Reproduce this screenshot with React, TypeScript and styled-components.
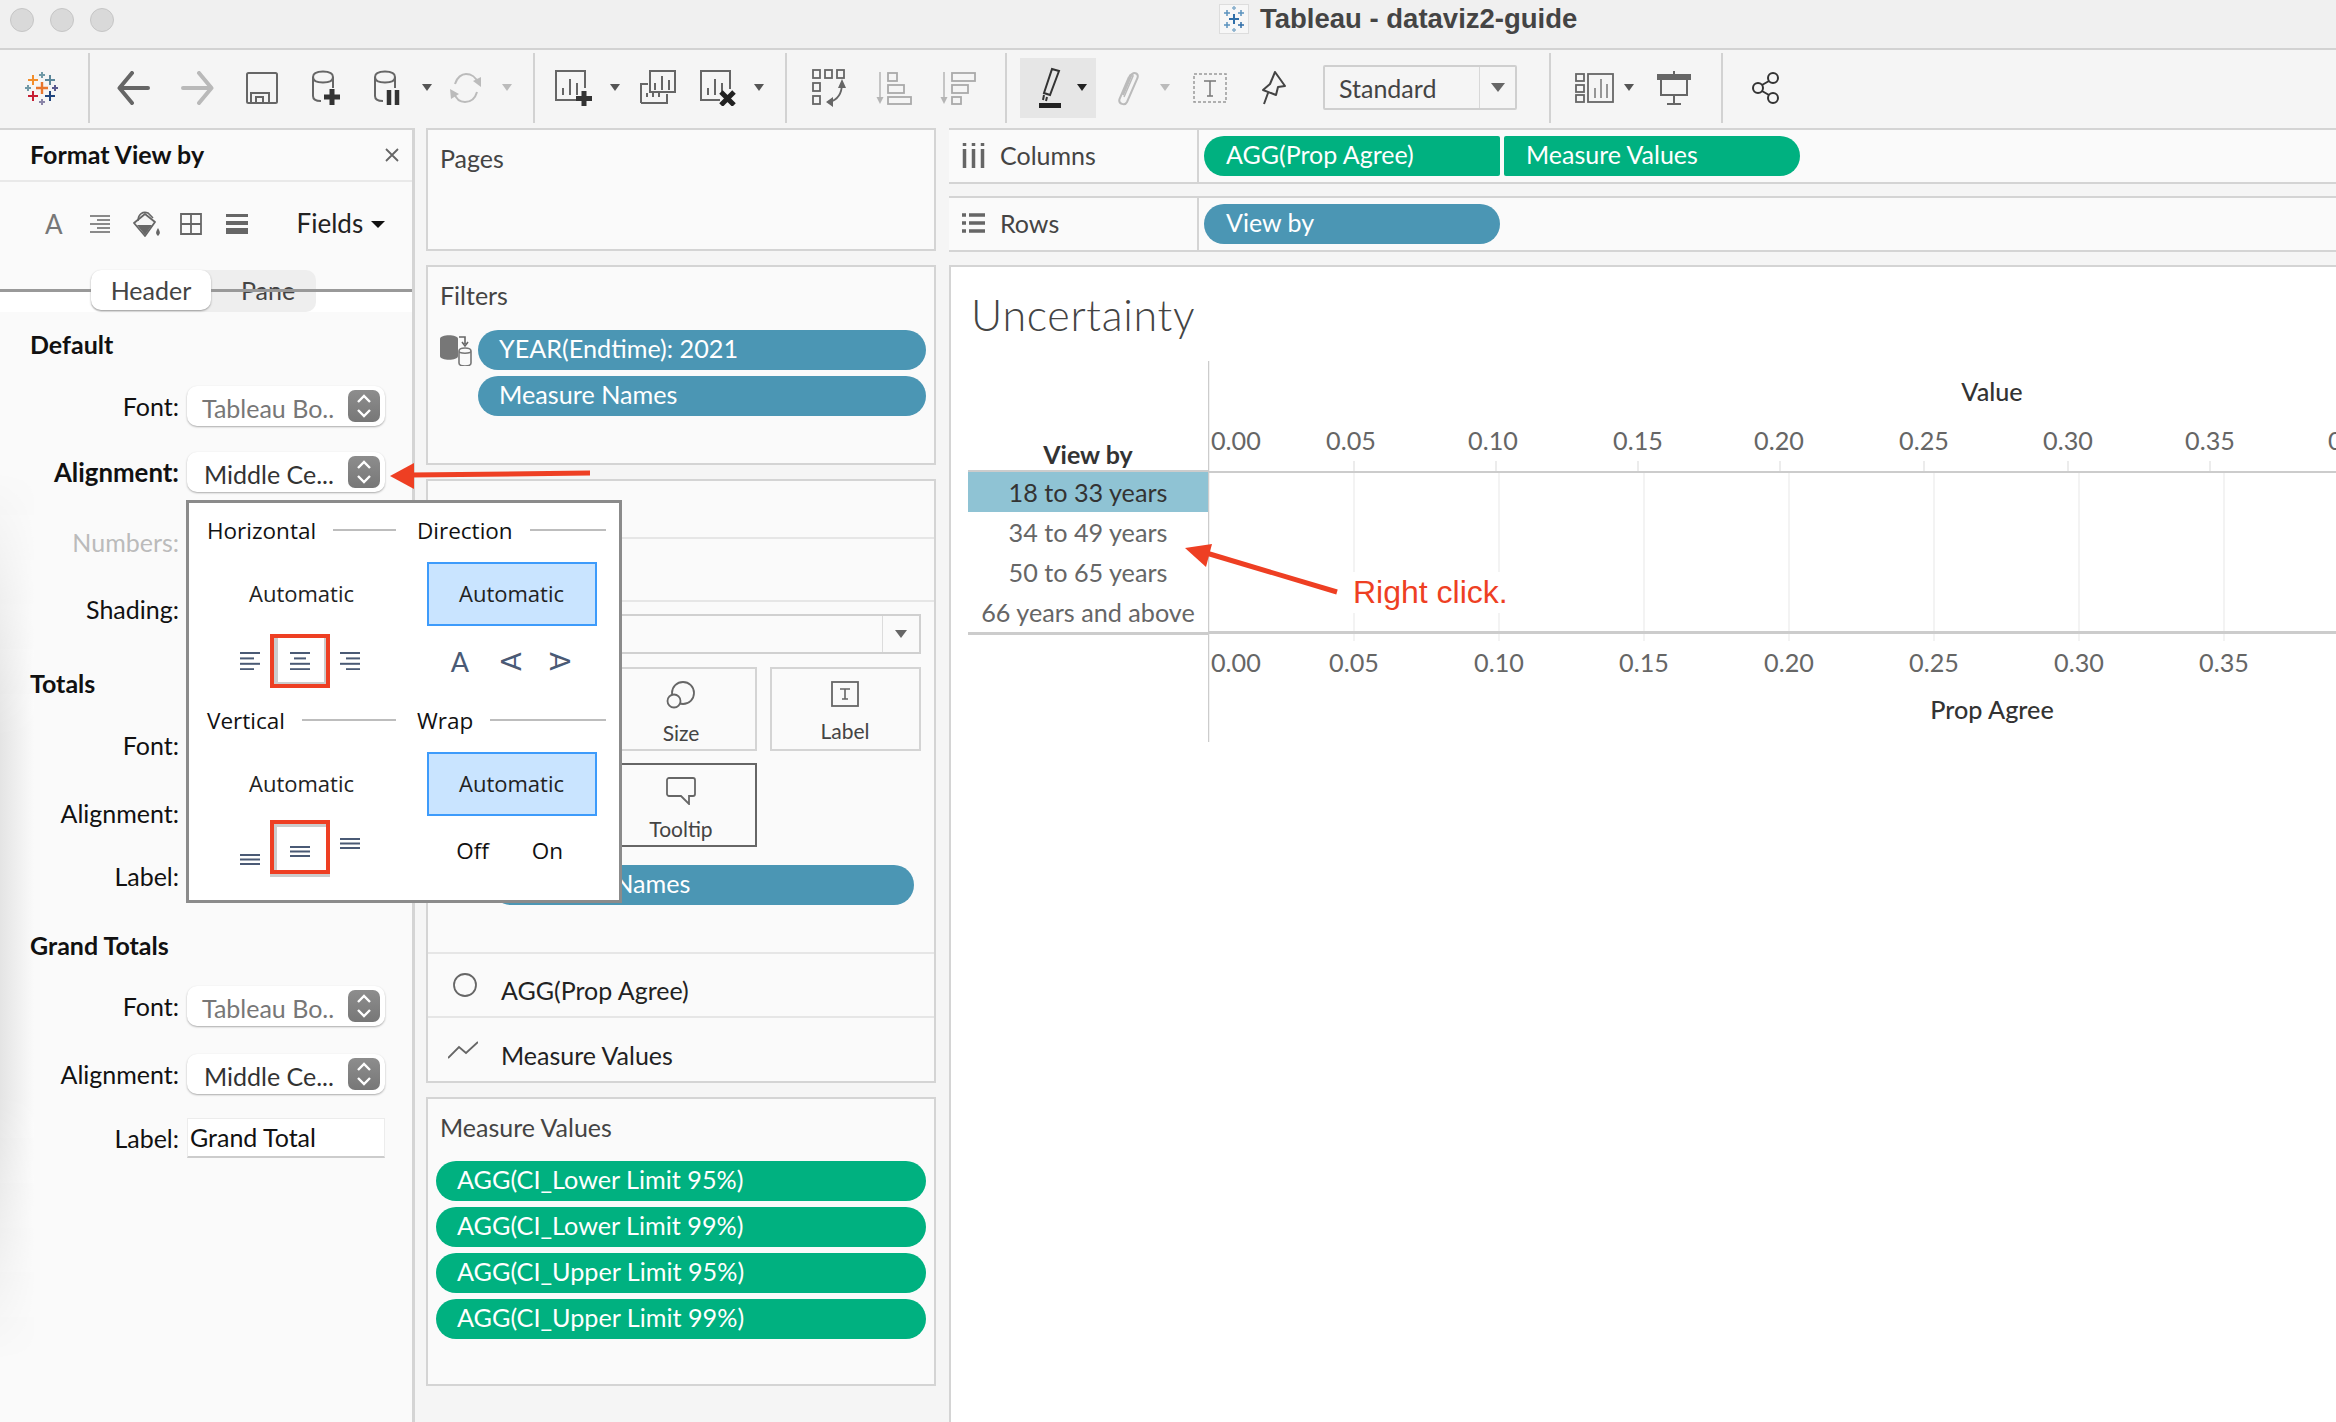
import * as React from "react";
import styled, { createGlobalStyle } from "styled-components";

const Global = createGlobalStyle`
  html, body { margin: 0; padding: 0; background: #f5f5f5; }
  body { width: 2336px; height: 1422px; overflow: hidden; font-family: Lato, "Liberation Sans", sans-serif; color: #333; }
  svg { display: block; }
`;

const Page = styled.div`
  position: relative;
  width: 2336px;
  height: 1422px;
  overflow: hidden;
`;

/* title bar */
const TitleBar = styled.div`
  height: 48px;
  background: #f0f0f0;
  border-bottom: 2px solid #d2d2d2;
  display: flex;
  align-items: center;
  padding-left: 10px;
  gap: 16px;
`;
const Light = styled.span`
  width: 22px;
  height: 22px;
  margin-top: -8px;
  border-radius: 50%;
  background: #d9d9d9;
  border: 1px solid #c6c6c6;
`;
const WindowTitle = styled.div`
  margin-left: 1089px;
  margin-top: -10px;
  display: flex;
  align-items: center;
  gap: 11px;
  font-family: "Liberation Sans", sans-serif;
  font-weight: 700;
  font-size: 27.5px;
  color: #444;
`;

/* toolbar */
const Toolbar = styled.div`
  height: 78px;
  box-sizing: border-box;
  padding-bottom: 3px;
  display: flex;
  align-items: center;
`;
const Tool = styled.span<{ $ml: number }>`
  margin-left: ${(p) => p.$ml}px;
  display: flex;
  align-items: center;
`;
const Sep = styled.span<{ $ml: number }>`
  margin-left: ${(p) => p.$ml}px;
  width: 2px;
  height: 70px;
  background: #d2d2d2;
`;
const Caret = styled.span<{ $ml: number; $c?: string; $big?: boolean }>`
  margin-left: ${(p) => p.$ml}px;
  width: 0;
  height: 0;
  border-left: ${(p) => (p.$big ? 7 : 5)}px solid transparent;
  border-right: ${(p) => (p.$big ? 7 : 5)}px solid transparent;
  border-top: 7px solid ${(p) => p.$c || "#555"};
`;
const HighlightBox = styled.span`
  margin-left: 13px;
  width: 76px;
  height: 60px;
  background: #e6e6e6;
  display: flex;
  align-items: center;
  padding-left: 18px;
  gap: 15px;
  box-sizing: border-box;
`;
const ToolSelect = styled.div`
  margin-left: 37px;
  width: 194px;
  height: 45px;
  box-sizing: border-box;
  border: 2px solid #cfcfcf;
  border-radius: 2px;
  display: flex;
  align-items: center;
  font-size: 25px;
  color: #444;
  padding-left: 14px;
`;
const ToolSelectArrow = styled.span`
  margin-left: auto;
  width: 35px;
  height: 100%;
  border-left: 1px solid #d8d8d8;
  display: flex;
  align-items: center;
  justify-content: center;
`;

/* main columns */
const Main = styled.div`
  display: flex;
  height: 1294px;
`;
const LeftPanel = styled.div`
  position: relative;
  width: 412px;
  background: #fafafa;
  border-top: 2px solid #d4d4d4;
  border-right: 3px solid #d4d4d4;
  &::before {
    content: "";
    position: absolute;
    left: 0;
    top: 340px;
    bottom: 60px;
    width: 34px;
    background: linear-gradient(to right, #e4e4e4, #fafafa);
    -webkit-mask-image: linear-gradient(to bottom, transparent, #000 30%, #000 70%, transparent);
  }
`;
const PanelHead = styled.div`
  height: 50px;
  box-sizing: content-box;
  border-bottom: 2px solid #e9e9e9;
  display: flex;
  align-items: center;
  justify-content: space-between;
  padding: 0 13px 0 30px;
  font-size: 25px;
  font-weight: 700;
  color: #111;
  position: relative;
  & > span {
    margin-top: -3px;
  }
`;
const FormatIcons = styled.div`
  height: 88px;
  display: flex;
  align-items: center;
  padding-bottom: 4px;
  box-sizing: border-box;
  position: relative;
`;
const FormatLetter = styled.span`
  margin-left: 45px;
  font-size: 26px;
  color: #777;
`;
const FieldsLabel = styled.span`
  margin-left: 49px;
  margin-top: -2px;
  font-size: 26px;
  color: #222;
`;
const TabRow = styled.div`
  position: relative;
  height: 42px;
  background: linear-gradient(#fafafa 50%, #fff 50%);
  padding-left: 91px;
  &::before {
    content: "";
    position: absolute;
    left: 0;
    right: 0;
    top: 19px;
    height: 3px;
    background: #999;
    z-index: 1;
  }
`;
const Segmented = styled.div`
  width: 225px;
  height: 42px;
  background: #eeeeee;
  border-radius: 10px;
  display: flex;
  font-size: 25px;
  color: #444;
`;
const Segment = styled.div<{ $active?: boolean }>`
  width: ${(p) => (p.$active ? 120 : 105)}px;
  height: 40px;
  box-sizing: border-box;
  display: flex;
  align-items: center;
  justify-content: center;
  border-radius: 10px;
  ${(p) =>
    p.$active
      ? "background:#fff; box-shadow:0 1px 2px #999; position:relative; z-index:2;"
      : "padding-left:9px;"}
`;
const FormHeading = styled.div<{ $mt: number }>`
  position: relative;
  margin-top: ${(p) => p.$mt}px;
  margin-left: 30px;
  height: 30px;
  line-height: 30px;
  font-size: 25px;
  font-weight: 700;
  color: #111;
`;
const FormRow = styled.div<{ $mt: number }>`
  position: relative;
  margin-top: ${(p) => p.$mt}px;
  height: 40px;
  display: flex;
  align-items: center;
`;
const FormLabel = styled.span<{ $bold?: boolean; $muted?: boolean }>`
  width: 179px;
  text-align: right;
  font-size: ${(p) => (p.$bold ? 25.8 : 25)}px;
  font-weight: ${(p) => (p.$bold ? 700 : 400)};
  color: ${(p) => (p.$muted ? "#bbb" : "#111")};
`;
const SelectField = styled.div<{ $muted?: boolean }>`
  margin-left: 8px;
  width: 198px;
  height: 40px;
  box-sizing: border-box;
  background: #fff;
  border-radius: 10px;
  box-shadow: 0 1px 2px #aaa;
  display: flex;
  align-items: center;
  padding: 3px 5px 0 ${(p) => (p.$muted ? 15 : 17)}px;
  font-size: 25px;
  color: ${(p) => (p.$muted ? "#777" : "#333")};
`;
const Stepper = styled.span`
  margin-left: auto;
  margin-top: -3px;
  width: 32px;
  height: 32px;
  border-radius: 7px;
  background: linear-gradient(#8d8d8d, #777);
  display: flex;
  align-items: center;
  justify-content: center;
`;
const TextField = styled.div`
  margin-left: 8px;
  width: 198px;
  height: 40px;
  box-sizing: border-box;
  background: #fff;
  border: 1px solid #ececec;
  border-bottom: 2px solid #ccc;
  font-size: 25px;
  color: #111;
  padding-left: 2px;
  line-height: 36px;
`;

/* middle column */
const MiddleColumn = styled.div`
  width: 510px;
  margin-left: 11px;
  display: flex;
  flex-direction: column;
  gap: 14px;
`;
const Card = styled.div<{ $h: number }>`
  height: ${(p) => p.$h}px;
  box-sizing: border-box;
  background: #fafafa;
  border: 2px solid #d4d4d4;
  display: flex;
  flex-direction: column;
`;
const CardTitle = styled.div`
  padding: 12px 0 0 12px;
  font-size: 25px;
  line-height: 32px;
  color: #444;
`;
const PillStack = styled.div<{ $left: number; $right: number; $mt: number }>`
  margin: ${(p) => p.$mt}px ${(p) => p.$right}px 0 ${(p) => p.$left}px;
  display: flex;
  flex-direction: column;
  gap: 6px;
  position: relative;
`;
const Pill = styled.div<{ $green?: boolean }>`
  height: 40px;
  border-radius: 20px;
  background: ${(p) => (p.$green ? "#00b180" : "#4b96b4")};
  color: #fff;
  font-size: 25.2px;
  line-height: 37px;
  padding-left: 21px;
`;
const DbIcon = styled.span`
  position: absolute;
  left: -38px;
  top: 4px;
`;
const MarksBlank = styled.div<{ $h: number }>`
  height: ${(p) => p.$h}px;
  border-bottom: 2px solid #e6e6e6;
  box-sizing: border-box;
`;
const MarkSelect = styled.div`
  margin: 12px 13px 0 14px;
  height: 40px;
  box-sizing: border-box;
  border: 2px solid #d0d0d0;
  display: flex;
  align-items: center;
`;
const MarkSelectArrow = styled.span`
  margin-left: auto;
  width: 36px;
  height: 100%;
  border-left: 1px solid #dcdcdc;
  display: flex;
  align-items: center;
  justify-content: center;
`;
const TileGrid = styled.div`
  margin: 13px 13px 0 14px;
  display: grid;
  grid-template-columns: repeat(3, 151px);
  column-gap: 13px;
  row-gap: 12px;
`;
const Tile = styled.div<{ $dark?: boolean }>`
  height: 84px;
  box-sizing: border-box;
  border: 2px solid ${(p) => (p.$dark ? "#666" : "#d4d4d4")};
  display: flex;
  flex-direction: column;
  align-items: center;
  font-size: 21px;
  color: #444;
  padding: 12px 1px 0 0;
  gap: 11px;
`;
const MarksPillSlot = styled.div`
  margin: 18px 20px 0 63px;
  height: 88px;
`;
const MarkLayer = styled.div`
  height: 65px;
  box-sizing: border-box;
  border-top: 2px solid #e6e6e6;
  display: flex;
  align-items: center;
  font-size: 25px;
  color: #222;
  padding: 10px 0 0 20px;
`;
const LayerIcon = styled.span<{ $dx?: number }>`
  width: ${(p) => 53 - (p.$dx || 0)}px;
  margin-left: ${(p) => p.$dx || 0}px;
  margin-top: -10px;
`;

/* right column */
const RightColumn = styled.div`
  flex: 1;
  margin-left: 13px;
  display: flex;
  flex-direction: column;
`;
const Shelf = styled.div<{ $mb: number }>`
  height: 56px;
  box-sizing: border-box;
  margin-bottom: ${(p) => p.$mb}px;
  background: #fafafa;
  border-top: 2px solid #d4d4d4;
  border-bottom: 2px solid #d4d4d4;
  display: flex;
`;
const ShelfLabel = styled.div`
  width: 250px;
  box-sizing: border-box;
  border-right: 2px solid #d4d4d4;
  display: flex;
  align-items: center;
  gap: 15px;
  padding: 0 0 2px 13px;
  font-size: 25px;
  color: #444;
`;
const ShelfPills = styled.div`
  display: flex;
  gap: 4px;
  padding: 6px 0 0 5px;
`;
const ShelfPill = styled.div<{ $green?: boolean; $side?: "l" | "r" | "b" }>`
  width: 296px;
  height: 40px;
  box-sizing: border-box;
  padding-left: 22px;
  font-size: 25px;
  line-height: 37px;
  color: #fff;
  background: ${(p) => (p.$green ? "#00b180" : "#4b96b4")};
  border-radius: ${(p) =>
    p.$side === "l" ? "20px 2px 2px 20px" : p.$side === "r" ? "2px 20px 20px 2px" : "20px"};
`;
const Viz = styled.div`
  flex: 1;
  background: #fff;
  border-top: 2px solid #d4d4d4;
  border-left: 2px solid #d4d4d4;
  display: flex;
  flex-direction: column;
`;
const VizTitle = styled.div`
  height: 94px;
  box-sizing: border-box;
  padding: 0 0 0 20px;
  display: flex;
  align-items: center;
  font-size: 43px;
  font-weight: 300;
  letter-spacing: 0.7px;
  color: #444;
`;
const ChartRow = styled.div`
  display: flex;
  margin-left: 17px;
`;
const HeaderColumn = styled.div`
  width: 240px;
`;
const HeaderTitle = styled.div`
  height: 111px;
  box-sizing: border-box;
  display: flex;
  align-items: flex-end;
  justify-content: center;
  font-size: 25px;
  font-weight: 700;
  color: #333;
  border-bottom: 2px solid #ccc;
  padding-bottom: 1px;
`;
const HeaderRow = styled.div<{ $selected?: boolean }>`
  height: 40px;
  display: flex;
  align-items: center;
  justify-content: center;
  font-size: 25.2px;
  color: ${(p) => (p.$selected ? "#333" : "#666")};
  background: ${(p) => (p.$selected ? "#8fc3d4" : "transparent")};
`;
const HeaderEnd = styled.div`
  border-top: 3px solid #ccc;
`;

/* alignment popup */
const Popup = styled.div`
  position: absolute;
  left: 186px;
  top: 500px;
  width: 436px;
  height: 403px;
  box-sizing: border-box;
  background: #fff;
  border: 3px solid #8b8b8b;
  display: flex;
  padding: 14px 0 0 18px;
  gap: 21px;
  z-index: 5;
  font-family: "Open Sans", sans-serif;
`;
const PopupColumn = styled.div`
  width: 189px;
`;
const PopupHead = styled.div<{ $mt?: number }>`
  margin-top: ${(p) => p.$mt || 0}px;
  height: 28px;
  box-sizing: border-box;
  padding-bottom: 2px;
  display: flex;
  align-items: center;
  gap: 17px;
  font-size: 22.5px;
  color: #111;
  &::after {
    content: "";
    flex: 1;
    height: 2px;
    background: #bdbdbd;
  }
`;
const PopupOption = styled.div<{ $on?: boolean }>`
  width: 170px;
  height: 64px;
  margin: 17px auto 0;
  box-sizing: border-box;
  padding-bottom: 3px;
  display: flex;
  align-items: center;
  justify-content: center;
  font-size: 22px;
  color: #222;
  background: ${(p) => (p.$on ? "#c9e4ff" : "transparent")};
  border: 2px solid ${(p) => (p.$on ? "#3d9bfb" : "transparent")};
`;
const PopupIcons = styled.div<{ $mt: number }>`
  margin: ${(p) => p.$mt}px 0 0 -3px;
  height: 54px;
  display: flex;
  justify-content: center;
  align-items: center;
`;
const IconCell = styled.span<{ $dy?: number }>`
  width: 50px;
  height: 54px;
  display: flex;
  align-items: center;
  justify-content: center;
  transform: translateY(${(p) => p.$dy || 0}px);
`;
const RedBox = styled.span<{ $inset: string }>`
  width: 60px;
  height: 54px;
  margin: 0 -5px;
  box-sizing: border-box;
  border: 4px solid #ee3f23;
  box-shadow: ${(p) => p.$inset};
  display: flex;
  align-items: center;
  justify-content: center;
`;
const LowLines = styled.span`
  margin-top: 8px;
`;
const DirectionGlyph = styled.span<{ $rot?: number }>`
  font-family: Lato, sans-serif;
  font-size: 27px;
  color: #4a5a75;
  transform: rotate(${(p) => p.$rot || 0}deg);
`;
const WrapChoice = styled.span<{ $w: number }>`
  width: ${(p) => p.$w}px;
  margin-top: 6px;
  text-align: center;
  font-size: 22.5px;
  color: #111;
`;

/* annotation over the view */
const RightClick = styled.div`
  position: absolute;
  left: 1342px;
  top: 572px;
  height: 41px;
  padding: 0 4px 0 11px;
  background: #fff;
  font-family: "Liberation Sans", sans-serif;
  font-size: 32px;
  line-height: 41px;
  color: #ee3f23;
  z-index: 6;
`;
const ArrowLayer = styled.svg`
  position: absolute;
  left: 0;
  top: 0;
  z-index: 7;
  pointer-events: none;
`;

const Cross = ({ x, y, s, c, w = 2 }: { x: number; y: number; s: number; c: string; w?: number }) => (
  <path d={`M${x - s} ${y}H${x + s}M${x} ${y - s}V${y + s}`} stroke={c} strokeWidth={w} fill="none" />
);

const TableauLogo = () => (
  <svg width="34" height="34" viewBox="0 0 34 34">
    <Cross x={17} y={17} s={6} c="#e8762d" w={2.4} />
    <Cross x={8} y={9} s={5} c="#f28e2b" />
    <Cross x={25} y={9} s={5} c="#5b879b" />
    <Cross x={8} y={25} s={5} c="#c72035" />
    <Cross x={25} y={25} s={5} c="#1f447e" />
    <Cross x={17} y={4} s={3} c="#7099a6" />
    <Cross x={3} y={17} s={3} c="#7099a6" />
    <Cross x={30} y={17} s={3} c="#59598f" />
    <Cross x={17} y={31} s={3} c="#8a85a8" />
  </svg>
);

const DocLogo = () => (
  <svg width="30" height="30" viewBox="0 0 30 30">
    <rect x="0.5" y="0.5" width="29" height="29" fill="#f7f7f7" stroke="#ddd" />
    <Cross x={15} y={15} s={5} c="#2f6ea8" />
    <Cross x={8} y={9} s={3} c="#5b93bf" w={1.5} />
    <Cross x={22} y={9} s={3} c="#5b93bf" w={1.5} />
    <Cross x={8} y={21} s={3} c="#5b93bf" w={1.5} />
    <Cross x={22} y={21} s={3} c="#2f6ea8" w={1.5} />
    <Cross x={15} y={4} s={2} c="#86aecb" w={1.5} />
    <Cross x={15} y={26} s={2} c="#86aecb" w={1.5} />
  </svg>
);

const ArrowIcon = ({ flip, c }: { flip?: boolean; c: string }) => (
  <svg width="33" height="34" viewBox="0 0 33 34" style={flip ? { transform: "scaleX(-1)" } : undefined}>
    <path d="M31 17H3M15 2L2.5 17L15 32" fill="none" stroke={c} strokeWidth="4" strokeLinecap="round" strokeLinejoin="round" />
  </svg>
);

const SaveIcon = () => (
  <svg width="32" height="32" viewBox="0 0 32 32">
    <rect x="1" y="1" width="30" height="30" rx="1.5" fill="none" stroke="#666" strokeWidth="2" />
    <path d="M5 31V21H23V31M10 31V25H17V31" fill="none" stroke="#666" strokeWidth="2" />
  </svg>
);

const Cylinder = () => (
  <path
    d="M1 7C1 3 5 1.5 11 1.5S21 3 21 7C21 11 17 12.5 11 12.5S1 11 1 7ZM1 7V26C1 29 4 31 9 31M21 7V18"
    fill="none"
    stroke="#666"
    strokeWidth="2"
  />
);

const AddSourceIcon = () => (
  <svg width="28" height="36" viewBox="0 0 28 36">
    <Cylinder />
    <path d="M20 19V35M12 27H28" stroke="#333" strokeWidth="5" fill="none" />
  </svg>
);

const PauseSourceIcon = () => (
  <svg width="26" height="36" viewBox="0 0 26 36">
    <Cylinder />
    <path d="M15 20V35M23 20V35" stroke="#333" strokeWidth="4.5" fill="none" />
  </svg>
);

const RefreshIcon = () => (
  <svg width="33" height="32" viewBox="0 0 33 32">
    <path d="M6 12C8 5 13 2 17 2C22 2 27 5 29 11M28 20C26 27 21 30 16 30C11 30 7 27 5 21" fill="none" stroke="#bbb" strokeWidth="2" />
    <path d="M24 9L32 5L32 15ZM1 17L10 22L2 27Z" fill="#bbb" />
  </svg>
);

const Bars = ({ x, y, h = 14 }: { x: number; y: number; h?: number }) => (
  <path d={`M${x} ${y + h}V${y + h - 7}M${x + 7} ${y + h}V${y}M${x + 14} ${y + h}V${y + 4}`} stroke="#666" strokeWidth="2" fill="none" />
);

const NewSheetIcon = () => (
  <svg width="37" height="36" viewBox="0 0 37 36">
    <path d="M23 30H1V1H30V18" fill="none" stroke="#666" strokeWidth="2" />
    <Bars x={8} y={9} h={16} />
    <path d="M29 21V36M21 28.5H37" stroke="#333" strokeWidth="5" fill="none" />
  </svg>
);

const DupSheetIcon = () => (
  <svg width="36" height="36" viewBox="0 0 36 36">
    <rect x="10" y="1" width="25" height="21" fill="#f5f5f5" stroke="#666" strokeWidth="2" />
    <Bars x={15} y={6} />
    <path d="M1 33V14H8M1 33H27V24" fill="none" stroke="#666" strokeWidth="2" />
    <path d="M7 27V23M13 27V23M19 27V23" stroke="#666" strokeWidth="2" />
  </svg>
);

const ClearSheetIcon = () => (
  <svg width="36" height="36" viewBox="0 0 36 36">
    <path d="M20 30H1V1H30V19" fill="none" stroke="#666" strokeWidth="2" />
    <Bars x={8} y={9} h={16} />
    <path d="M21 22L34 35M34 22L21 35" stroke="#222" strokeWidth="5" fill="none" />
  </svg>
);

const SwapIcon = () => (
  <svg width="35" height="38" viewBox="0 0 35 38">
    <g fill="none" stroke="#666" strokeWidth="1.8">
      <rect x="1" y="1" width="7" height="8" />
      <rect x="13" y="1" width="7" height="8" />
      <rect x="25" y="1" width="7" height="8" />
      <rect x="1" y="14" width="7" height="8" />
      <rect x="1" y="27" width="7" height="8" />
      <path d="M30 14C30 24 26 31 17 33" />
    </g>
    <path d="M30 10L34 19H26ZM14 33L21 28V38Z" fill="#666" />
  </svg>
);

const SortIcon = ({ desc }: { desc?: boolean }) => (
  <svg width="36" height="34" viewBox="0 0 36 34">
    <path d="M4 1V30" stroke="#b5b5b5" strokeWidth="1.5" />
    <path d="M0.5 26H7.5L4 33Z" fill="#b5b5b5" />
    <g fill="none" stroke="#aaa" strokeWidth="1.8">
      {desc ? (
        <>
          <rect x="12" y="2" width="23" height="8" />
          <rect x="12" y="14" width="16" height="8" />
          <rect x="12" y="26" width="9" height="7" />
        </>
      ) : (
        <>
          <rect x="12" y="2" width="9" height="8" />
          <rect x="12" y="14" width="16" height="8" />
          <rect x="12" y="26" width="23" height="7" />
        </>
      )}
    </g>
  </svg>
);

const PenIcon = () => (
  <svg width="24" height="42" viewBox="0 0 24 42">
    <path d="M14 2L21 4L12 28L6 26Z" fill="none" stroke="#333" strokeWidth="2" />
    <path d="M6 28L5 33M9 30L8 34" stroke="#333" strokeWidth="2" />
    <rect x="1" y="36" width="22" height="5" fill="#222" />
  </svg>
);

const ClipIcon = () => (
  <svg width="24" height="36" viewBox="0 0 24 36">
    <path d="M7 25L15 6C17 1 23 3 21.500 8L11 32C9 36 2 34 3.500 29L13 7" fill="none" stroke="#bbb" strokeWidth="2" />
    <path d="M13 7C14 4 17 3 17 6L8 27" fill="none" stroke="#bbb" strokeWidth="1.500" />
  </svg>
);

const TextBoxIcon = () => (
  <svg width="34" height="30" viewBox="0 0 34 30">
    <rect x="1" y="1" width="32" height="28" fill="none" stroke="#999" strokeWidth="1.5" strokeDasharray="3 2" />
    <path d="M11 8H23M17 8V23M14 23H20" stroke="#777" strokeWidth="1.5" fill="none" />
  </svg>
);

const PinIcon = () => (
  <svg width="25" height="34" viewBox="0 0 25 34">
    <path d="M14 1L24 15L17 16L15 24L2 19L9 13ZM7 22L3 33" fill="none" stroke="#444" strokeWidth="2" strokeLinejoin="round" />
  </svg>
);

const ShowMeIcon = () => (
  <svg width="39" height="30" viewBox="0 0 39 30">
    <g fill="none" stroke="#666" strokeWidth="1.8">
      <rect x="1" y="1" width="8" height="7" />
      <rect x="1" y="12" width="8" height="7" />
      <rect x="1" y="22" width="8" height="7" />
      <rect x="13" y="1" width="25" height="28" />
    </g>
    <path d="M20 25V15M26 25V6M32 25V11" stroke="#777" strokeWidth="1.5" />
  </svg>
);

const PresentIcon = () => (
  <svg width="34" height="34" viewBox="0 0 34 34">
    <rect x="0" y="3" width="34" height="6" fill="#666" />
    <path d="M17 0V3M4 9V24H30V9M17 24V33M10 33H24" fill="none" stroke="#666" strokeWidth="2" />
  </svg>
);

const ShareIcon = () => (
  <svg width="28" height="32" viewBox="0 0 28 32">
    <g fill="none" stroke="#333" strokeWidth="2">
      <circle cx="21" cy="6" r="5" />
      <circle cx="6" cy="16" r="5" />
      <circle cx="21" cy="26" r="5" />
      <path d="M10 13L17 9M10 19L17 23" />
    </g>
  </svg>
);

const CloseIcon = () => (
  <svg width="14" height="14" viewBox="0 0 14 14">
    <path d="M1 1L13 13M13 1L1 13" stroke="#666" strokeWidth="1.8" />
  </svg>
);

const AlignRightIcon = () => (
  <svg width="20" height="18" viewBox="0 0 20 18">
    <path d="M0 1H20M7 5H20M0 9H20M7 13H20M0 17H20" stroke="#666" strokeWidth="1.6" />
  </svg>
);

const BucketIcon = () => (
  <svg width="28" height="26" viewBox="0 0 28 26">
    <path d="M1 12L12 3L22 11L12 25Z" fill="#f5f5f5" stroke="#666" strokeWidth="1.8" strokeLinejoin="round" />
    <path d="M4 14H19L12 24Z" fill="#666" />
    <path d="M5 10C5 3 10 0 15 2L20 7" fill="none" stroke="#666" strokeWidth="1.6" />
    <path d="M25 17C27 21 28 22 25 25C22 22 23 21 25 17Z" fill="#666" />
  </svg>
);

const GridIcon = () => (
  <svg width="22" height="22" viewBox="0 0 22 22">
    <path d="M1 1H21V21H1ZM11 1V21M1 11H21" fill="none" stroke="#666" strokeWidth="1.8" />
  </svg>
);

const LinesIcon = () => (
  <svg width="22" height="20" viewBox="0 0 22 20">
    <rect y="0" width="22" height="3" fill="#666" />
    <rect y="7" width="22" height="4" fill="#666" />
    <rect y="14" width="22" height="6" fill="#666" />
  </svg>
);

const StepperIcon = () => (
  <svg width="18" height="26" viewBox="0 0 18 26">
    <path d="M3 9L9 3L15 9M3 17L9 23L15 17" fill="none" stroke="#fff" strokeWidth="2.4" />
  </svg>
);

const TinyCaret = ({ c, s = 6 }: { c: string; s?: number }) => (
  <svg width={s * 2} height={s + 2} viewBox={`0 0 ${s * 2} ${s + 2}`}>
    <path d={`M0 0H${s * 2}L${s} ${s + 2}Z`} fill={c} />
  </svg>
);

const DataSourceIcon = () => (
  <svg width="32" height="32" viewBox="0 0 32 32">
    <path d="M0 5C0 0 18 0 18 5V22C18 27 0 27 0 22Z" fill="#777" />
    <path d="M19 3H25V10M22 8L25 12L28 8" fill="none" stroke="#666" strokeWidth="1.6" />
    <path d="M19 17C19 13 31 13 31 17V29C31 33 19 33 19 29ZM19 17C19 20 31 20 31 17" fill="#fafafa" stroke="#777" strokeWidth="1.6" />
  </svg>
);

const SizeIcon = () => (
  <svg width="30" height="28" viewBox="0 0 30 28">
    <circle cx="17" cy="12" r="11" fill="none" stroke="#666" strokeWidth="1.8" />
    <circle cx="8" cy="20" r="6.500" fill="#fafafa" stroke="#666" strokeWidth="1.8" />
  </svg>
);

const LabelIcon = () => (
  <svg width="28" height="26" viewBox="0 0 28 26">
    <rect x="1" y="1" width="26" height="24" fill="none" stroke="#666" strokeWidth="1.8" />
    <path d="M9 8H19M14 8V18M11 18H17" fill="none" stroke="#666" strokeWidth="1.6" />
  </svg>
);

const TooltipIcon = () => (
  <svg width="30" height="28" viewBox="0 0 30 28">
    <path d="M3 1H27C28 1 29 2 29 3V17C29 18 28 19 27 19H23V27L15 19H3C2 19 1 18 1 17V3C1 2 2 1 3 1Z" fill="none" stroke="#666" strokeWidth="1.8" />
  </svg>
);

const CircleIcon = () => (
  <svg width="24" height="24" viewBox="0 0 24 24">
    <circle cx="12" cy="12" r="11" fill="none" stroke="#666" strokeWidth="1.8" />
  </svg>
);

const ZigzagIcon = () => (
  <svg width="30" height="18" viewBox="0 0 30 18">
    <path d="M0 17L11 6L18 12L30 1" fill="none" stroke="#666" strokeWidth="1.8" />
  </svg>
);

const ColumnsIcon = () => (
  <svg width="23" height="25" viewBox="0 0 23 25">
    <path d="M2.500 0V3M11.500 0V3M20.500 0V3M2.500 6V25M11.500 6V25M20.500 6V25" stroke="#666" strokeWidth="3.500" />
  </svg>
);

const RowsIcon = () => (
  <svg width="23" height="20" viewBox="0 0 23 20">
    <path d="M0 2H4M7 2H23M0 10H4M7 10H23M0 18H4M7 18H23" stroke="#666" strokeWidth="3.500" />
  </svg>
);

const alignments: Record<string, number[][]> = {
  left: [[0, 20], [0, 14], [0, 20], [0, 14]],
  center: [[0, 20], [4, 16], [0, 20], [0, 20]],
  right: [[0, 20], [6, 20], [0, 20], [6, 20]],
};

const AlignLines = ({ kind }: { kind: string }) => (
  <svg width="20" height="18" viewBox="0 0 20 18">
    {alignments[kind].map(([a, b], i) => (
      <rect key={i} x={a} y={i * 5.4} width={b - a} height="2" fill="#4a5a75" />
    ))}
  </svg>
);

const TripleLines = () => (
  <svg width="20" height="11" viewBox="0 0 20 11">
    <rect y="0" width="20" height="2" fill="#4a5a75" />
    <rect y="4.500" width="20" height="2" fill="#4a5a75" />
    <rect y="9" width="20" height="2" fill="#4a5a75" />
  </svg>
);

const topTicks = [
  ["0.00", 0],
  ["0.05", 143],
  ["0.10", 285],
  ["0.15", 430],
  ["0.20", 571],
  ["0.25", 716],
  ["0.30", 860],
  ["0.35", 1002],
  ["0.40", 1145],
] as const;

const bottomTicks = ["0.00", "0.05", "0.10", "0.15", "0.20", "0.25", "0.30", "0.35"];

const AxisChart = () => (
  <svg width="1128" height="381" viewBox="0 0 1128 381" fontFamily="Lato, sans-serif" fontSize="25.200">
    {bottomTicks.slice(1).map((_, i) => {
      const x = 146 + i * 145;
      return <path key={x} d={`M${x} 112V280`} stroke="#f3f3f3" strokeWidth="2" />;
    })}
    {[146, 288, 430, 572, 716, 860, 1002].map((x) => (
      <path key={x} d={`M${x} 100V111`} stroke="#ececec" strokeWidth="2" />
    ))}
    <path d="M0.5 0V381" stroke="#ccc" strokeWidth="1.5" />
    <path d="M0 111H1128" stroke="#ccc" strokeWidth="2" />
    <path d="M0 271.500H1128" stroke="#ccc" strokeWidth="3" />
    <text x="784" y="40" textAnchor="middle" fill="#333" fontWeight="500">Value</text>
    {topTicks.map(([t, x]) => (
      <text key={t} x={x === 0 ? 3 : x} y="89" textAnchor={x === 0 ? "start" : "middle"} fill="#666">{t}</text>
    ))}
    {bottomTicks.map((t, i) => (
      <text key={t} x={i === 0 ? 3 : 146 + (i - 1) * 145} y="311" textAnchor={i === 0 ? "start" : "middle"} fill="#666">{t}</text>
    ))}
    <text x="784" y="358" textAnchor="middle" fill="#333" fontWeight="500">Prop Agree</text>
  </svg>
);

const ageRows = ["18 to 33 years", "34 to 49 years", "50 to 65 years", "66 years and above"];
const measurePills = ["AGG(CI_Lower Limit 95%)", "AGG(CI_Lower Limit 99%)", "AGG(CI_Upper Limit 95%)", "AGG(CI_Upper Limit 99%)"];

const Select = ({ muted, children }: { muted?: boolean; children: React.ReactNode }) => (
  <SelectField $muted={muted}>
    {children}
    <Stepper>
      <StepperIcon />
    </Stepper>
  </SelectField>
);

export default function App() {
  return (
    <Page>
      <Global />
      <TitleBar>
        <Light />
        <Light />
        <Light />
        <WindowTitle>
          <DocLogo />
          Tableau - dataviz2-guide
        </WindowTitle>
      </TitleBar>

      <Toolbar>
        <Tool $ml={25}><TableauLogo /></Tool>
        <Sep $ml={29} />
        <Tool $ml={27}><ArrowIcon c="#666" /></Tool>
        <Tool $ml={31}><ArrowIcon flip c="#b9b9b9" /></Tool>
        <Tool $ml={32}><SaveIcon /></Tool>
        <Tool $ml={34}><AddSourceIcon /></Tool>
        <Tool $ml={34}><PauseSourceIcon /></Tool>
        <Caret $ml={22} />
        <Tool $ml={17}><RefreshIcon /></Tool>
        <Caret $ml={20} $c="#bbb" />
        <Sep $ml={21} />
        <Tool $ml={20}><NewSheetIcon /></Tool>
        <Caret $ml={18} />
        <Tool $ml={20}><DupSheetIcon /></Tool>
        <Tool $ml={24}><ClearSheetIcon /></Tool>
        <Caret $ml={18} />
        <Sep $ml={21} />
        <Tool $ml={25}><SwapIcon /></Tool>
        <Tool $ml={29}><SortIcon /></Tool>
        <Tool $ml={28}><SortIcon desc /></Tool>
        <Sep $ml={29} />
        <HighlightBox>
          <PenIcon />
          <Caret $ml={0} $c="#222" />
        </HighlightBox>
        <Tool $ml={20}><ClipIcon /></Tool>
        <Caret $ml={20} $c="#bbb" />
        <Tool $ml={23}><TextBoxIcon /></Tool>
        <Tool $ml={34}><PinIcon /></Tool>
        <ToolSelect>
          Standard
          <ToolSelectArrow><TinyCaret c="#666" s={7} /></ToolSelectArrow>
        </ToolSelect>
        <Sep $ml={32} />
        <Tool $ml={24}><ShowMeIcon /></Tool>
        <Caret $ml={10} />
        <Tool $ml={23}><PresentIcon /></Tool>
        <Sep $ml={30} />
        <Tool $ml={29}><ShareIcon /></Tool>
      </Toolbar>

      <Main>
        <LeftPanel>
          <PanelHead>
            <span>Format View by</span>
            <CloseIcon />
          </PanelHead>
          <FormatIcons>
            <FormatLetter>A</FormatLetter>
            <Tool $ml={27}><AlignRightIcon /></Tool>
            <Tool $ml={23}><BucketIcon /></Tool>
            <Tool $ml={19}><GridIcon /></Tool>
            <Tool $ml={24}><LinesIcon /></Tool>
            <FieldsLabel>Fields</FieldsLabel>
            <Caret $ml={8} $c="#111" $big />
          </FormatIcons>
          <TabRow>
            <Segmented>
              <Segment $active>Header</Segment>
              <Segment>Pane</Segment>
            </Segmented>
          </TabRow>

          <FormHeading $mt={17}>Default</FormHeading>
          <FormRow $mt={27}>
            <FormLabel>Font:</FormLabel>
            <Select muted>Tableau Bo..</Select>
          </FormRow>
          <FormRow $mt={26}>
            <FormLabel $bold>Alignment:</FormLabel>
            <Select>Middle Ce...</Select>
          </FormRow>
          <FormRow $mt={30}>
            <FormLabel $muted>Numbers:</FormLabel>
          </FormRow>
          <FormRow $mt={27}>
            <FormLabel>Shading:</FormLabel>
          </FormRow>

          <FormHeading $mt={39}>Totals</FormHeading>
          <FormRow $mt={27}>
            <FormLabel>Font:</FormLabel>
          </FormRow>
          <FormRow $mt={28}>
            <FormLabel>Alignment:</FormLabel>
          </FormRow>
          <FormRow $mt={23}>
            <FormLabel>Label:</FormLabel>
          </FormRow>

          <FormHeading $mt={34}>Grand Totals</FormHeading>
          <FormRow $mt={26}>
            <FormLabel>Font:</FormLabel>
            <Select muted>Tableau Bo..</Select>
          </FormRow>
          <FormRow $mt={28}>
            <FormLabel>Alignment:</FormLabel>
            <Select>Middle Ce...</Select>
          </FormRow>
          <FormRow $mt={24}>
            <FormLabel>Label:</FormLabel>
            <TextField>Grand Total</TextField>
          </FormRow>
        </LeftPanel>

        <MiddleColumn>
          <Card $h={123}>
            <CardTitle>Pages</CardTitle>
          </Card>
          <Card $h={200}>
            <CardTitle>Filters</CardTitle>
            <PillStack $left={50} $right={8} $mt={19}>
              <DbIcon><DataSourceIcon /></DbIcon>
              <Pill>YEAR(Endtime): 2021</Pill>
              <Pill>Measure Names</Pill>
            </PillStack>
          </Card>
          <Card $h={604}>
            {/* the popup covers the card's heading, the select's text and the first tiles */}
            <MarksBlank $h={58} />
            <MarksBlank $h={64} />
            <MarkSelect>
              <MarkSelectArrow><TinyCaret c="#666" s={6} /></MarkSelectArrow>
            </MarkSelect>
            <TileGrid>
              <Tile />
              <Tile><SizeIcon />Size</Tile>
              <Tile><LabelIcon />Label</Tile>
              <Tile />
              <Tile $dark><TooltipIcon />Tooltip</Tile>
            </TileGrid>
            <MarksPillSlot>
              <Pill>Measure Names</Pill>
            </MarksPillSlot>
            <MarkLayer>
              <LayerIcon $dx={5}><CircleIcon /></LayerIcon>
              AGG(Prop Agree)
            </MarkLayer>
            <MarkLayer>
              <LayerIcon><ZigzagIcon /></LayerIcon>
              Measure Values
            </MarkLayer>
          </Card>
          <Card $h={289}>
            <CardTitle>Measure Values</CardTitle>
            <PillStack $left={8} $right={8} $mt={18}>
              {measurePills.map((m) => (
                <Pill $green key={m}>{m}</Pill>
              ))}
            </PillStack>
          </Card>
        </MiddleColumn>

        <RightColumn>
          <Shelf $mb={12}>
            <ShelfLabel><ColumnsIcon />Columns</ShelfLabel>
            <ShelfPills>
              <ShelfPill $green $side="l">AGG(Prop Agree)</ShelfPill>
              <ShelfPill $green $side="r">Measure Values</ShelfPill>
            </ShelfPills>
          </Shelf>
          <Shelf $mb={13}>
            <ShelfLabel><RowsIcon />Rows</ShelfLabel>
            <ShelfPills>
              <ShelfPill>View by</ShelfPill>
            </ShelfPills>
          </Shelf>
          <Viz>
            <VizTitle>Uncertainty</VizTitle>
            <ChartRow>
              <HeaderColumn>
                <HeaderTitle>View by</HeaderTitle>
                {ageRows.map((r, i) => (
                  <HeaderRow key={r} $selected={i === 0}>{r}</HeaderRow>
                ))}
                <HeaderEnd />
              </HeaderColumn>
              <AxisChart />
            </ChartRow>
          </Viz>
        </RightColumn>
      </Main>

      <Popup>
        <PopupColumn>
          <PopupHead>Horizontal</PopupHead>
          <PopupOption>Automatic</PopupOption>
          <PopupIcons $mt={8}>
            <IconCell><AlignLines kind="left" /></IconCell>
            <RedBox $inset="inset 4px 0 0 #ccc, inset -2px -2px 0 #ccc"><AlignLines kind="center" /></RedBox>
            <IconCell><AlignLines kind="right" /></IconCell>
          </PopupIcons>
          <PopupHead $mt={19}>Vertical</PopupHead>
          <PopupOption>Automatic</PopupOption>
          <PopupIcons $mt={4}>
            <IconCell $dy={12}><TripleLines /></IconCell>
            <RedBox $inset="inset 3px 3px 0 #ccc, 0 3px 0 #ccc"><LowLines><TripleLines /></LowLines></RedBox>
            <IconCell $dy={-4}><TripleLines /></IconCell>
          </PopupIcons>
        </PopupColumn>
        <PopupColumn>
          <PopupHead>Direction</PopupHead>
          <PopupOption $on>Automatic</PopupOption>
          <PopupIcons $mt={8}>
            <IconCell><DirectionGlyph>A</DirectionGlyph></IconCell>
            <IconCell><DirectionGlyph $rot={-90}>A</DirectionGlyph></IconCell>
            <IconCell><DirectionGlyph $rot={90}>A</DirectionGlyph></IconCell>
          </PopupIcons>
          <PopupHead $mt={19}>Wrap</PopupHead>
          <PopupOption $on>Automatic</PopupOption>
          <PopupIcons $mt={4}>
            <WrapChoice $w={75}>Off</WrapChoice>
            <WrapChoice $w={75}>On</WrapChoice>
          </PopupIcons>
        </PopupColumn>
      </Popup>

      <RightClick>Right click.</RightClick>
      <ArrowLayer width="2336" height="1422" viewBox="0 0 2336 1422">
        <path d="M590 473L410 475" stroke="#ee3f23" strokeWidth="5" fill="none" />
        <path d="M390 476L414 463L414 489Z" fill="#ee3f23" />
        <path d="M1337 592L1203 552" stroke="#ee3f23" strokeWidth="5" fill="none" />
        <path d="M1185 548L1212 544L1206 567Z" fill="#ee3f23" />
      </ArrowLayer>
    </Page>
  );
}
